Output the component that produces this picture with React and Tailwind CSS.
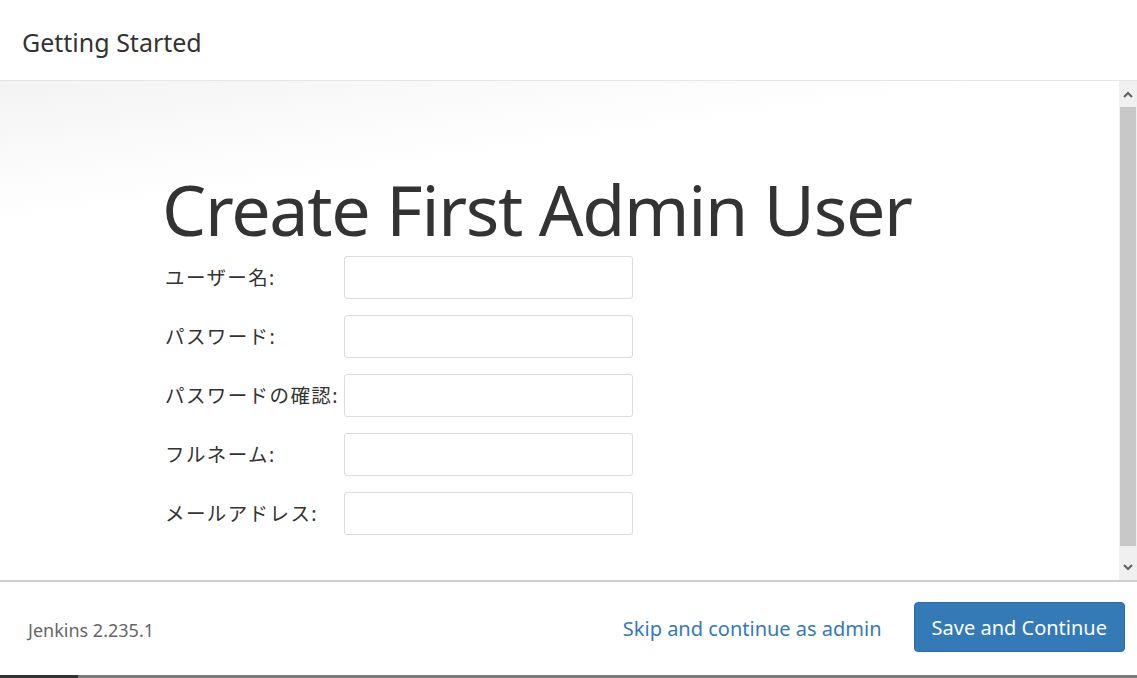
const fields = [
  "ユーザー名:",
  "パスワード:",
  "パスワードの確認:",
  "フルネーム:",
  "メールアドレス:",
];

const font = "font-['Noto_Sans','Noto_Sans_CJK_JP',sans-serif]";

const ScrollBar = () => (
  <div className="w-[18px] flex flex-col bg-[#f0f0f0]">
    <div className="h-[26px] flex items-center justify-center">
      <svg width="10" height="7" viewBox="0 0 10 7">
        <path d="M1 6L5 2L9 6" fill="none" stroke="#606060" strokeWidth="2" />
      </svg>
    </div>
    <div className="flex-1 bg-[#c8c8c8] mx-[1px] mb-[8px]" />
    <div className="h-[26px] flex items-center justify-center">
      <svg width="10" height="7" viewBox="0 0 10 7">
        <path d="M1 1L5 5L9 1" fill="none" stroke="#606060" strokeWidth="2" />
      </svg>
    </div>
  </div>
);

export default function App() {
  return (
    <div className={`${font} w-[1137px] h-[678px] flex flex-col bg-white text-[#333] overflow-hidden`}>
      {/* ヘッダー */}
      <div className="h-[81px] shrink-0 border-b border-[#e5e5e5] flex items-center px-[22px]">
        <h2 className="text-[25px] leading-none pt-[5px]">Getting Started</h2>
      </div>

      {/* 本体 */}
      <div className="flex-1 flex min-h-0">
        <div className="flex-1 bg-[linear-gradient(172deg,#f3f3f3_0%,#fafafa_12%,#ffffff_22%)] pl-[162px] pt-[88px]">
          <h1 className="text-[70px] leading-[80px] tracking-[-1.3px] mb-[7px]">Create First Admin User</h1>
          <div className="flex flex-col gap-[16px] pl-[3px]">
            {fields.map((label) => (
              <div key={label} className="flex items-center">
                <label className="w-[179px] text-[19.5px] text-[#333] tracking-[1.4px]">{label}</label>
                <input
                  type="text"
                  className="w-[289px] h-[43px] border border-[#dcdcdc] rounded-[3px] bg-white"
                />
              </div>
            ))}
          </div>
        </div>
        <ScrollBar />
      </div>

      {/* フッター */}
      <div className="h-[95px] shrink-0 border-t-2 border-[#d0d0d0] flex items-center pl-[28px] pr-[12px]">
        <span className="text-[18px] text-[#666] pt-[4px]">Jenkins 2.235.1</span>
        <div className="ml-auto flex items-center pb-[3px]">
          <a className="text-[20px] text-[#337ab7] mr-[32px] pt-[3px]">Skip and continue as admin</a>
          <button className="h-[50px] px-[17px] pt-[2px] rounded-[4px] bg-[#337ab7] border border-[#2e6da4] text-white text-[20px]">
            Save and Continue
          </button>
        </div>
      </div>
      <div className="h-[3px] shrink-0 flex">
        <div className="w-[78px] bg-[#333]" />
        <div className="flex-1 bg-[#7a7a7a]" />
      </div>
    </div>
  );
}
